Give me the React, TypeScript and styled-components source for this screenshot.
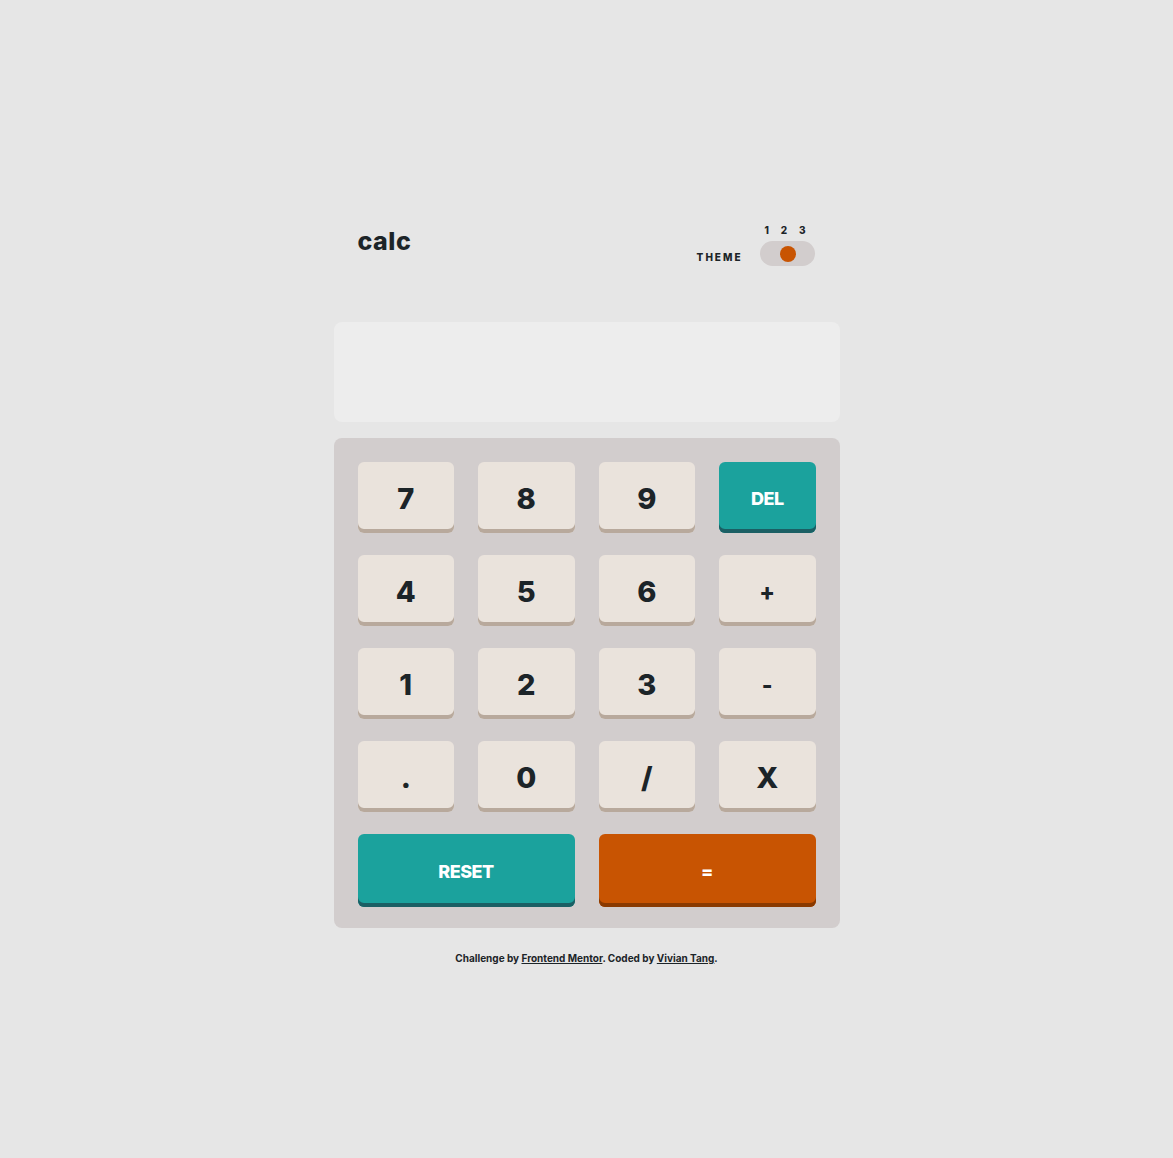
import styled, { createGlobalStyle } from "styled-components"

const GlobalStyle = createGlobalStyle`
  * {
    box-sizing: border-box;
  }

  body {
    margin: 0;
    background: #e6e6e6;
    font-family: "Inter", "Noto Sans", sans-serif;
    color: #1c2428;
  }
`

const Page = styled.main`
  display: flex;
  flex-direction: column;
  align-items: center;
  min-height: 100vh;
  padding-top: 224px;
`

const Calculator = styled.div`
  width: 506px;
`

const Header = styled.header`
  display: flex;
  justify-content: space-between;
  align-items: flex-end;
  padding: 0 25px 0 24px;
  margin-bottom: 56px;
`

const Logo = styled.h1`
  margin: 0 0 12px;
  font-size: 25px;
  font-weight: 800;
  letter-spacing: 0.5px;
  line-height: 1;
`

const ThemeArea = styled.div`
  display: flex;
  align-items: flex-end;
  gap: 17px;
`

const ThemeLabel = styled.span`
  font-size: 10px;
  font-weight: 800;
  letter-spacing: 2px;
  margin-bottom: 3px;
`

const Switcher = styled.div`
  display: flex;
  flex-direction: column;
  align-items: stretch;
  gap: 5px;
`

const Numbers = styled.div`
  display: flex;
  justify-content: space-between;
  padding: 0 9px 0 5px;
  font-size: 10px;
  font-weight: 800;
`

const Track = styled.div`
  position: relative;
  width: 55px;
  height: 25px;
  border-radius: 13px;
  background: #d2cdcd;
`

const Knob = styled.span`
  position: absolute;
  top: 5px;
  left: 20px;
  width: 16px;
  height: 16px;
  border-radius: 50%;
  background: #c85402;
`

const Screen = styled.div`
  height: 100px;
  border-radius: 8px;
  background: #ededed;
  margin-bottom: 16px;
`

const Keypad = styled.div`
  display: grid;
  grid-template-columns: repeat(4, 1fr);
  grid-template-rows: repeat(4, 71px) 73px;
  gap: 22px 24px;
  padding: 24px 24px 21px;
  border-radius: 8px;
  background: #d2cdcd;
`

type Variant = "light" | "teal" | "orange"
type Size = "big" | "mid" | "small"

const palette: Record<Variant, { bg: string; shadow: string; color: string }> = {
  light: { bg: "#eae3dc", shadow: "#b8a99c", color: "#1c2428" },
  teal: { bg: "#1ba29d", shadow: "#1b5f64", color: "#ffffff" },
  orange: { bg: "#c85402", shadow: "#8a3a01", color: "#ffffff" },
}

const sizes: Record<Size, string> = {
  big: "29px",
  mid: "23px",
  small: "18px",
}

const Key = styled.button<{ $variant: Variant; $wide?: boolean; $size: Size }>`
  grid-column: ${(p) => (p.$wide ? "span 2" : "span 1")};
  display: flex;
  align-items: center;
  justify-content: center;
  padding: 2px 0 0;
  border: none;
  border-radius: 6px;
  background: ${(p) => palette[p.$variant].bg};
  box-shadow: inset 0 -4px 0 ${(p) => palette[p.$variant].shadow};
  color: ${(p) => palette[p.$variant].color};
  font-family: inherit;
  font-size: ${(p) => sizes[p.$size]};
  font-weight: 800;
  letter-spacing: ${(p) => (p.$size === "small" ? "-0.5px" : "0")};
  cursor: pointer;
`

const Footer = styled.footer`
  margin-top: 24px;
  font-size: 10px;
  font-weight: 700;
  text-align: center;

  a {
    color: inherit;
  }
`

const keys: { label: string; variant: Variant; size: Size; wide?: boolean }[] = [
  { label: "7", variant: "light", size: "big" },
  { label: "8", variant: "light", size: "big" },
  { label: "9", variant: "light", size: "big" },
  { label: "DEL", variant: "teal", size: "small" },
  { label: "4", variant: "light", size: "big" },
  { label: "5", variant: "light", size: "big" },
  { label: "6", variant: "light", size: "big" },
  { label: "+", variant: "light", size: "mid" },
  { label: "1", variant: "light", size: "big" },
  { label: "2", variant: "light", size: "big" },
  { label: "3", variant: "light", size: "big" },
  { label: "-", variant: "light", size: "mid" },
  { label: ".", variant: "light", size: "big" },
  { label: "0", variant: "light", size: "big" },
  { label: "/", variant: "light", size: "big" },
  { label: "X", variant: "light", size: "big" },
  { label: "RESET", variant: "teal", size: "small", wide: true },
  { label: "=", variant: "orange", size: "small", wide: true },
]

function App() {
  return (
    <>
      <GlobalStyle />
      <Page>
        <Calculator>
          <Header>
            <Logo>calc</Logo>
            <ThemeArea>
              <ThemeLabel>THEME</ThemeLabel>
              <Switcher>
                <Numbers>
                  <span>1</span>
                  <span>2</span>
                  <span>3</span>
                </Numbers>
                <Track>
                  <Knob />
                </Track>
              </Switcher>
            </ThemeArea>
          </Header>

          <Screen />

          <Keypad>
            {keys.map((k) => (
              <Key key={k.label} $variant={k.variant} $size={k.size} $wide={k.wide}>
                {k.label}
              </Key>
            ))}
          </Keypad>
        </Calculator>

        <Footer>
          Challenge by <a href="#">Frontend Mentor</a>. Coded by <a href="#">Vivian Tang</a>.
        </Footer>
      </Page>
    </>
  )
}

export default App
